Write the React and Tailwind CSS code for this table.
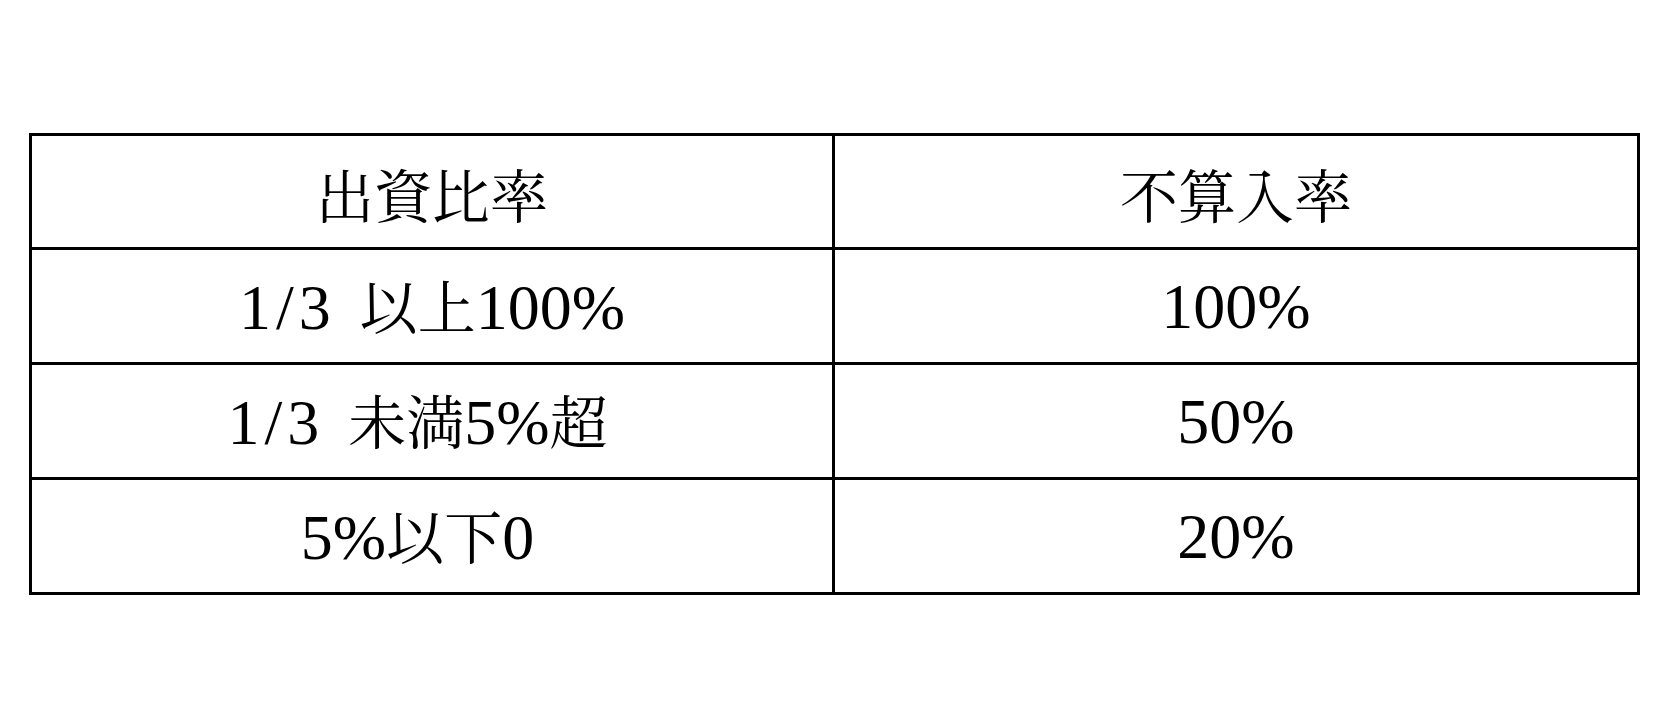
function Cell({ text }) {
  const parts = text.match(/[\x20-\x7e]+|[^\x20-\x7e]+/g) || [];
  return (
    <span className="whitespace-pre leading-none">
      {parts.map((p, i) =>
        /^[\x20-\x7e]+$/.test(p) ? (
          <span key={i} className="text-[64px]" style={{ fontFamily: '"Liberation Serif", serif' }}>
            {p.split("").map((c, j) =>
              c === "/" ? (
                <span key={j} className="mx-[5px]">/</span>
              ) : c === " " ? (
                <span key={j} className="inline-block w-[29px]"> </span>
              ) : (
                c
              )
            )}
          </span>
        ) : (
          <span key={i} className="text-[58px]" style={{ fontFamily: '"Noto Serif CJK JP", "Noto Sans CJK JP", serif' }}>
            {p}
          </span>
        )
      )}
    </span>
  );
}

export default function App() {
  const rows = [
    ["出資比率", "不算入率"],
    ["1/3 以上100%", "100%"],
    ["1/3 未満5%超 ", "50%"],
    ["5%以下0 ", "20%"],
  ];
  return (
    <div className="w-[1670px] h-[706px] bg-white text-black pt-[133px] pl-[29px]">
      <div className="w-[1611px] border-[3px] border-black flex flex-col">
        {rows.map((r, i) => (
          <div key={i} className={`flex ${i > 0 ? "h-[115px] border-t-[3px] border-black" : "h-[111px]"}`}>
            <div className="w-[803px] border-r-[3px] border-black flex items-center justify-center pt-[2px]">
              <Cell text={r[0]} />
            </div>
            <div className="flex-1 flex items-center justify-center pt-[2px]">
              <Cell text={r[1]} />
            </div>
          </div>
        ))}
      </div>
    </div>
  );
}
